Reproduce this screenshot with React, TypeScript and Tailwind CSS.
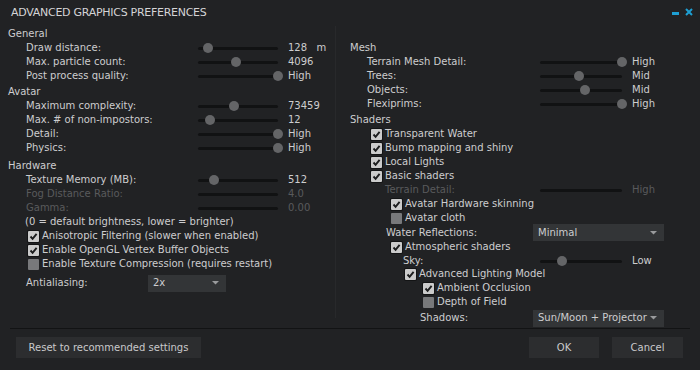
import React from 'react';

type SliderRowProps = {
  label: string;
  value: string;
  pos: number;
  disabled?: boolean;
  indent?: string;
  labelW?: string;
  trackW?: string;
  h?: string;
};

const Slider: React.FC<{ pos: number; disabled?: boolean; w: string }> = ({ pos, disabled, w }) => (
  <div className={`relative h-[14px] shrink-0 ${w}`}>
    <div className="absolute left-0 right-0 top-[6px] h-[3px] rounded-full bg-[#111213]" />
    {!disabled && (
      <div
        className="absolute top-[2px] h-[10px] w-[10px] -ml-[5px] rounded-full bg-[#646567]"
        style={{ left: `${pos}%` }}
      />
    )}
  </div>
);

const SliderRow: React.FC<SliderRowProps> = ({
  label,
  value,
  pos,
  disabled,
  indent = 'pl-[18px]',
  labelW = 'w-[172px]',
  trackW = 'w-[80px]',
  h = 'h-[14px]',
}) => (
  <div className={`flex items-center whitespace-nowrap ${h} ${indent} ${disabled ? 'text-[#595a5c]' : ''}`}>
    <span className={`${labelW} shrink-0`}>{label}</span>
    <Slider pos={pos} disabled={disabled} w={trackW} />
    <span className="ml-[10px] whitespace-pre">{value}</span>
  </div>
);

const Check: React.FC<{ label: string; checked?: boolean; indent: string }> = ({ label, checked, indent }) => (
  <div className={`flex h-[14px] items-center gap-[3px] whitespace-nowrap ${indent}`}>
    <span
      className={`flex h-[11px] w-[11px] shrink-0 items-center justify-center rounded-[1px] ${checked ? 'bg-[#cbcbcb] ring-1 ring-[#131415]' : 'bg-[#78797b]'}`}
    >
      {checked && (
        <svg width="9" height="9" viewBox="0 0 9 9">
          <path d="M1.5 4.5 L3.6 6.8 L7.6 1.8" stroke="#1b1c1d" strokeWidth="1.9" fill="none" />
        </svg>
      )}
    </span>
    <span>{label}</span>
  </div>
);

const Dropdown: React.FC<{ value: string; w: string }> = ({ value, w }) => (
  <div className={`flex h-[17px] shrink-0 items-center justify-between bg-[#333537] pl-[5px] pr-[7px] ${w}`}>
    <span>{value}</span>
    <svg width="7" height="4" viewBox="0 0 7 4">
      <path d="M0 0 H7 L3.5 3.5 Z" fill="#9a9b9d" />
    </svg>
  </div>
);

const Heading: React.FC<{ children: React.ReactNode; cls?: string }> = ({ children, cls = '' }) => (
  <div className={`flex h-[15px] items-center ${cls}`}>{children}</div>
);

export default function App() {
  return (
    <div
      className="flex h-[370px] w-[700px] flex-col bg-[#212224] text-[10px] leading-none text-[#cdcdcf]"
      style={{ fontFamily: '"DejaVu Sans", sans-serif' }}
    >
      <div className="flex h-[24px] items-center justify-between pl-[11px] pr-[7px]">
        <span className="text-[11px] tracking-tight text-[#d4d4d6]">ADVANCED GRAPHICS PREFERENCES</span>
        <div className="flex items-center gap-[6px]">
          <span className="mt-[3px] h-[3px] w-[7px] bg-[#1e9fd3]" />
          <svg width="8" height="8" viewBox="0 0 8 8">
            <path d="M1 1 L7 7 M7 1 L1 7" stroke="#1e9fd3" strokeWidth="2" />
          </svg>
        </div>
      </div>

      <div className="flex h-[304px] pt-[2px]">
        <div className="mb-[10px] w-[336px] border-r border-[#28292b] pl-[8px]">
          <Heading>General</Heading>
          <SliderRow label="Draw distance:" value="128   m" pos={12} />
          <SliderRow label="Max. particle count:" value="4096" pos={48} />
          <SliderRow label="Post process quality:" value="High" pos={100} />
          <Heading cls="mt-[1px]">Avatar</Heading>
          <SliderRow label="Maximum complexity:" value="73459" pos={45} />
          <SliderRow label="Max. # of non-impostors:" value="12" pos={15} />
          <SliderRow label="Detail:" value="High" pos={100} />
          <SliderRow label="Physics:" value="High" pos={100} />
          <Heading cls="mt-[3px]">Hardware</Heading>
          <SliderRow label="Texture Memory (MB):" value="512" pos={20} />
          <SliderRow label="Fog Distance Ratio:" value="4.0" pos={0} disabled />
          <SliderRow label="Gamma:" value="0.00" pos={0} disabled />
          <div className="flex h-[14px] items-center pl-[17px]">(0 = default brightness, lower = brighter)</div>
          <Check label="Anisotropic Filtering (slower when enabled)" checked indent="pl-[20px]" />
          <Check label="Enable OpenGL Vertex Buffer Objects" checked indent="pl-[20px]" />
          <Check label="Enable Texture Compression (requires restart)" indent="pl-[20px]" />
          <div className="mt-[3px] flex h-[18px] items-center pl-[18px]">
            <span className="w-[122px]">Antialiasing:</span>
            <Dropdown value="2x" w="w-[78px]" />
          </div>
        </div>

        <div className="flex-1 pl-[14px] pt-[14px]">
          <Heading>Mesh</Heading>
          <SliderRow label="Terrain Mesh Detail:" value="High" pos={100} indent="pl-[17px]" labelW="w-[173px]" trackW="w-[82px]" />
          <SliderRow label="Trees:" value="Mid" pos={48} indent="pl-[17px]" labelW="w-[173px]" trackW="w-[82px]" />
          <SliderRow label="Objects:" value="Mid" pos={55} indent="pl-[17px]" labelW="w-[173px]" trackW="w-[82px]" />
          <SliderRow label="Flexiprims:" value="High" pos={100} indent="pl-[17px]" labelW="w-[173px]" trackW="w-[82px]" />
          <Heading cls="mt-[1px]">Shaders</Heading>
          <Check label="Transparent Water" checked indent="pl-[21px]" />
          <Check label="Bump mapping and shiny" checked indent="pl-[21px]" />
          <Check label="Local Lights" checked indent="pl-[21px]" />
          <Check label="Basic shaders" checked indent="pl-[21px]" />
          <SliderRow label="Terrain Detail:" value="High" pos={0} disabled indent="pl-[35px]" labelW="w-[155px]" trackW="w-[82px]" />
          <Check label="Avatar Hardware skinning" checked indent="pl-[41px]" />
          <Check label="Avatar cloth" indent="pl-[41px]" />
          <div className="flex h-[15px] items-center pl-[36px]">
            <span className="w-[147px]">Water Reflections:</span>
            <Dropdown value="Minimal" w="w-[131px]" />
          </div>
          <Check label="Atmospheric shaders" checked indent="pl-[41px]" />
          <SliderRow label="Sky:" value="Low" pos={27} indent="pl-[53px]" labelW="w-[137px]" trackW="w-[82px]" h="h-[13px]" />
          <Check label="Advanced Lighting Model" checked indent="pl-[55px]" />
          <Check label="Ambient Occlusion" checked indent="pl-[73px]" />
          <Check label="Depth of Field" indent="pl-[73px]" />
          <div className="flex h-[18px] items-center pl-[70px]">
            <span className="w-[113px]">Shadows:</span>
            <Dropdown value="Sun/Moon + Projector" w="w-[131px]" />
          </div>
        </div>
      </div>

      <div className="mx-[10px] border-t border-[#121314]" />
      <div className="flex items-center justify-between pl-[16px] pr-[17px] pt-[8px]">
        <button className="h-[21px] w-[185px] bg-[#2c2d2f] text-[#c9c9cb]">Reset to recommended settings</button>
        <div className="flex gap-[13px]">
          <button className="h-[21px] w-[70px] bg-[#2c2d2f] text-[#c9c9cb]">OK</button>
          <button className="h-[21px] w-[71px] bg-[#2c2d2f] text-[#c9c9cb]">Cancel</button>
        </div>
      </div>
    </div>
  );
}
